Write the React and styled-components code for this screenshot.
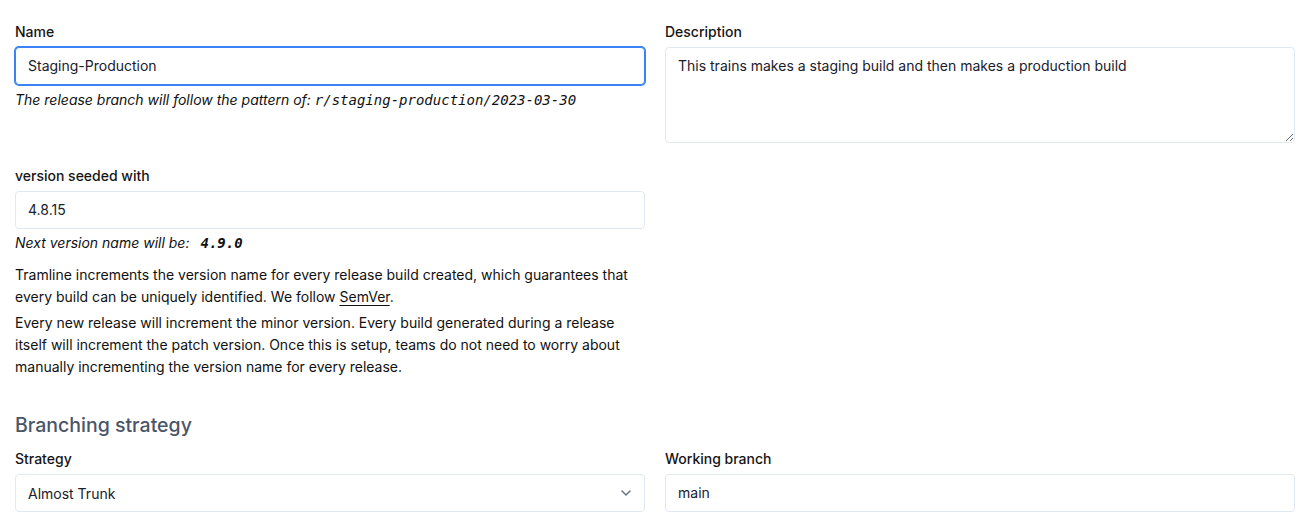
import React from "react";
import styled, { createGlobalStyle, css } from "styled-components";

const Global = createGlobalStyle`
  html, body { margin: 0; padding: 0; background: #ffffff; }
  body { font-family: Inter, "Noto Sans", "Liberation Sans", sans-serif; color: #111827; }
  * { box-sizing: border-box; }
`;

const Page = styled.form`
  padding: 22px 13px 0 15px;
  width: 1308px;
`;

const Grid = styled.div`
  display: grid;
  grid-template-columns: 630px 630px;
  column-gap: 20px;
  row-gap: 23px;
  align-items: start;
`;

const Field = styled.div`
  display: flex;
  flex-direction: column;
`;

const Label = styled.label`
  font-size: 14px;
  line-height: 20px;
  font-weight: 500;
  color: #151515;
  margin-bottom: 5px;
`;

const boxStyle = css`
  width: 100%;
  font-family: Inter, "Noto Sans", "Liberation Sans", sans-serif;
  font-size: 14px;
  color: #1a202c;
  background: #ffffff;
  border: 1px solid #e2e8f0;
  border-radius: 4px;
  padding: 0 12px;
  outline: none;
`;

const Input = styled.input`
  ${boxStyle};
  height: 38px;
  padding-bottom: 1px;
  ${(p) =>
    p.$focused &&
    css`
      border-color: #3b82f6;
      box-shadow: 0 0 0 1px #3b82f6;
    `}
`;

const TextArea = styled.textarea`
  ${boxStyle};
  height: 96px;
  padding: 8px 12px;
  line-height: 20px;
  resize: vertical;
  display: block;
`;

const SelectWrap = styled.div`
  position: relative;
  width: 100%;
`;

const Select = styled.select`
  ${boxStyle};
  height: 38px;
  appearance: none;
  -webkit-appearance: none;
`;

const Chevron = styled.svg`
  position: absolute;
  right: 13px;
  top: 13px;
  pointer-events: none;
`;

const Hint = styled.p`
  margin: ${(p) => p.$mt || 5}px 0 0;
  font-size: 14px;
  line-height: 20px;
  font-style: italic;
  color: #111111;
`;

const Code = styled.code`
  font-family: "DejaVu Sans Mono", "Liberation Mono", monospace;
  font-size: 14px;
  font-style: italic;
  font-weight: ${(p) => (p.$bold ? 700 : 400)};
  margin-left: ${(p) => p.$ml || 0}px;
`;

const Para = styled.p`
  margin: ${(p) => p.$mt}px 0 0;
  font-size: 14px;
  line-height: 22px;
  color: #111111;
`;

const Link = styled.a`
  color: inherit;
  text-decoration: underline;
  text-underline-offset: 3px;
`;

const Heading = styled.h2`
  margin: 33px 0 10px;
  font-size: 19.5px;
  line-height: 28px;
  font-weight: 500;
  color: #4a5568;
`;

export default function App() {
  return (
    <>
      <Global />
      <Page onSubmit={(e) => e.preventDefault()}>
        <Grid>
          <Field>
            <Label>Name</Label>
            <Input $focused defaultValue="Staging-Production" />
            <Hint>
              The release branch will follow the pattern of:{" "}
              <Code>r/staging-production/2023-03-30</Code>
            </Hint>
          </Field>
          <Field>
            <Label>Description</Label>
            <TextArea defaultValue="This trains makes a staging build and then makes a production build" />
          </Field>
          <Field>
            <Label>version seeded with</Label>
            <Input defaultValue="4.8.15" />
            <Hint $mt={4}>
              Next version name will be:
              <Code $bold $ml={11}>4.9.0</Code>
            </Hint>
            <Para $mt={11}>
              Tramline increments the version name for every release build created, which guarantees that
              every build can be uniquely identified. We follow <Link href="#">SemVer</Link>.
            </Para>
            <Para $mt={4}>
              Every new release will increment the minor version. Every build generated during a release
              itself will increment the patch version. Once this is setup, teams do not need to worry about
              manually incrementing the version name for every release.
            </Para>
          </Field>
        </Grid>
        <Heading>Branching strategy</Heading>
        <Grid>
          <Field>
            <Label>Strategy</Label>
            <SelectWrap>
              <Select defaultValue="almost_trunk">
                <option value="almost_trunk">Almost Trunk</option>
                <option value="release_backmerge">Release Backmerge</option>
                <option value="parallel_working">Parallel Working</option>
              </Select>
              <Chevron width="12" height="12" viewBox="0 0 12 12" fill="none">
                <path d="M2 4l4 4 4-4" stroke="#6b7280" strokeWidth="1.5" strokeLinecap="round" strokeLinejoin="round" />
              </Chevron>
            </SelectWrap>
          </Field>
          <Field>
            <Label>Working branch</Label>
            <Input defaultValue="main" />
          </Field>
        </Grid>
      </Page>
    </>
  );
}
